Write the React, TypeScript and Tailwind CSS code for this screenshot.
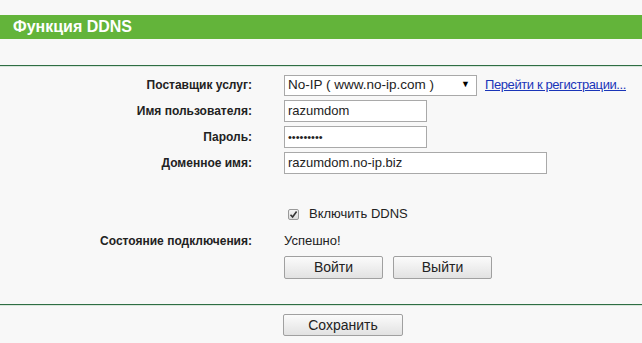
import React from "react";

export default function App() {
  const font = { fontFamily: '"Liberation Sans", Arial, sans-serif' };
  const label = "w-[252px] text-right font-bold text-[12px]";
  return (
    <div className="w-[642px] h-[343px] bg-[#f8f8f8] text-[13px] text-[#222] overflow-hidden" style={font}>
      <div className="h-[15px]" />
      <div className="h-[24px] bg-[#63b43a] flex items-center pl-[13px] text-white font-bold text-[16px]">
        Функция DDNS
      </div>
      <div className="h-[26px]" />
      <div className="h-px bg-[#2f6e44]" />
      <div className="h-px bg-[#d9e6dc]" />
      <div className="pt-[7px] flex flex-col">
        <div className="flex items-center h-[22px]">
          <div className={label}>Поставщик услуг:</div>
          <div className="ml-[32px] w-[193px] h-[21px] border border-[#a9a9a9] bg-white flex items-center justify-between pl-[3px] pr-[6px]">
            <span className="text-[13.5px]">No-IP ( www.no-ip.com )</span>
            <span className="text-[9px] text-black">▼</span>
          </div>
          <a className="ml-[8px] text-[#1a35b8] underline text-[13px] tracking-[-0.4px]">Перейти к регистрации...</a>
        </div>
        <div className="flex items-center h-[22px] mt-[4px]">
          <div className={label}>Имя пользователя:</div>
          <div className="ml-[32px] w-[143px] h-[22px] border border-[#a9a9a9] bg-white flex items-center pl-[3px]">razumdom</div>
        </div>
        <div className="flex items-center h-[22px] mt-[4px]">
          <div className={label}>Пароль:</div>
          <div className="ml-[32px] w-[143px] h-[22px] border border-[#a9a9a9] bg-white flex items-center pl-[3px] text-[11px]">•••••••••</div>
        </div>
        <div className="flex items-center h-[22px] mt-[4px]">
          <div className={label}>Доменное имя:</div>
          <div className="ml-[32px] w-[263px] h-[22px] border border-[#a9a9a9] bg-white flex items-center pl-[3px]">razumdom.no-ip.biz</div>
        </div>
        <div className="flex items-center h-[20px] mt-[30px]">
          <div className="ml-[288px] w-[11px] h-[11px] border border-[#9a9a9a] rounded-[2px] bg-gradient-to-b from-[#f4f4f4] to-[#dcdcdc] flex items-center justify-center">
            <svg width="9" height="9" viewBox="0 0 9 9"><path d="M1.5 4.8 L3.6 7 L7.6 1.6" stroke="#333" strokeWidth="1.6" fill="none" /></svg>
          </div>
          <span className="ml-[10px]">Включить DDNS</span>
        </div>
        <div className="flex items-center h-[20px] mt-[7px]">
          <div className={label}>Состояние подключения:</div>
          <div className="ml-[32px]">Успешно!</div>
        </div>
        <div className="flex items-center mt-[5px]">
          <button className="ml-[284px] w-[99px] h-[23px] border border-[#a0a0a0] rounded-[2px] bg-gradient-to-b from-[#fbfbfb] to-[#e2e2e2] text-[14px] text-[#222]" style={font}>Войти</button>
          <button className="ml-[10px] w-[99px] h-[23px] border border-[#a0a0a0] rounded-[2px] bg-gradient-to-b from-[#fbfbfb] to-[#e2e2e2] text-[14px] text-[#222]" style={font}>Выйти</button>
        </div>
      </div>
      <div className="mt-[25px] h-px bg-[#2f6e44]" />
      <div className="h-px bg-[#d9e6dc]" />
      <div className="mt-[8px] flex">
        <button className="ml-[283px] w-[120px] h-[22px] border border-[#a0a0a0] rounded-[2px] bg-gradient-to-b from-[#fbfbfb] to-[#e2e2e2] text-[14px] text-[#222]" style={font}>Сохранить</button>
      </div>
    </div>
  );
}
